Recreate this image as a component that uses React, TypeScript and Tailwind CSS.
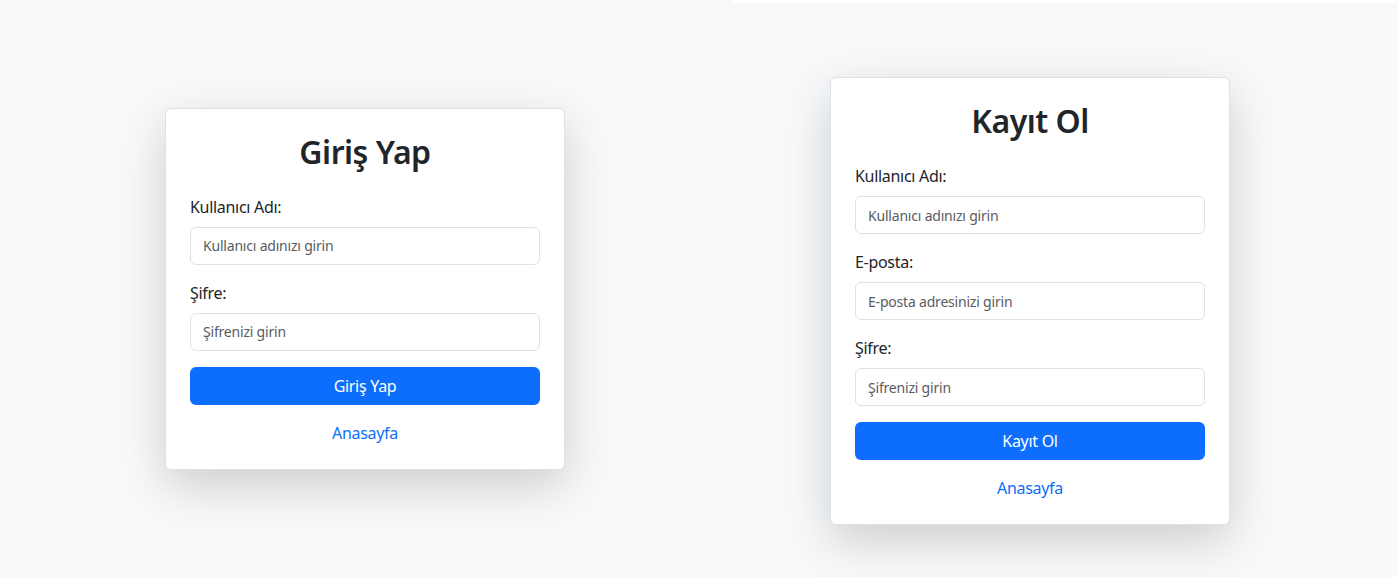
import React from "react";

const font = { fontFamily: '"Noto Sans", "Open Sans", sans-serif' };

interface FieldProps {
  label: string;
  placeholder: string;
  type?: string;
}

function Field({ label, placeholder, type = "text" }: FieldProps) {
  return (
    <div className="mb-4">
      <label className="mb-2 block text-base leading-6 tracking-[-0.3px] text-[#212529]">{label}</label>
      <input
        type={type}
        placeholder={placeholder}
        className="block h-[38px] w-full rounded-md border border-[#dee2e6] bg-white px-3 text-sm tracking-[-0.2px] text-[#212529] outline-none placeholder:text-[#595c5f]"
      />
    </div>
  );
}

interface AuthCardProps {
  title: string;
  fields: FieldProps[];
  submit: string;
}

function AuthCard({ title, fields, submit }: AuthCardProps) {
  return (
    <div className="w-[400px] rounded-md border border-[#dee2e6] bg-white p-6 shadow-[0_1rem_3rem_rgba(0,0,0,0.175)]">
      <h2 className="mb-6 text-center text-[32px] font-semibold leading-[38px] tracking-[-0.5px] text-[#212529]">
        {title}
      </h2>
      {fields.map((f) => (
        <Field key={f.label} {...f} />
      ))}
      <button
        type="button"
        className="block h-[38px] w-full rounded-md bg-[#0d6efd] text-base tracking-[-0.3px] text-white"
      >
        {submit}
      </button>
      <div className="mt-4 text-center leading-6">
        <a href="#" className="text-base tracking-[-0.3px] text-[#0d6efd]">
          Anasayfa
        </a>
      </div>
    </div>
  );
}

export default function App() {
  return (
    <div className="flex h-[577px] w-[1400px] bg-white" style={font}>
      <div className="flex w-[732px] items-center justify-center bg-[#f8f9fa] pr-[2px]">
        <AuthCard
          title="Giriş Yap"
          fields={[
            { label: "Kullanıcı Adı:", placeholder: "Kullanıcı adınızı girin" },
            { label: "Şifre:", placeholder: "Şifrenizi girin", type: "password" },
          ]}
          submit="Giriş Yap"
        />
      </div>
      <div className="mt-[3px] w-[666px] bg-[#f8f9fa] pl-[98px] pt-[74px]">
        <AuthCard
          title="Kayıt Ol"
          fields={[
            { label: "Kullanıcı Adı:", placeholder: "Kullanıcı adınızı girin" },
            { label: "E-posta:", placeholder: "E-posta adresinizi girin", type: "email" },
            { label: "Şifre:", placeholder: "Şifrenizi girin", type: "password" },
          ]}
          submit="Kayıt Ol"
        />
      </div>
    </div>
  );
}
